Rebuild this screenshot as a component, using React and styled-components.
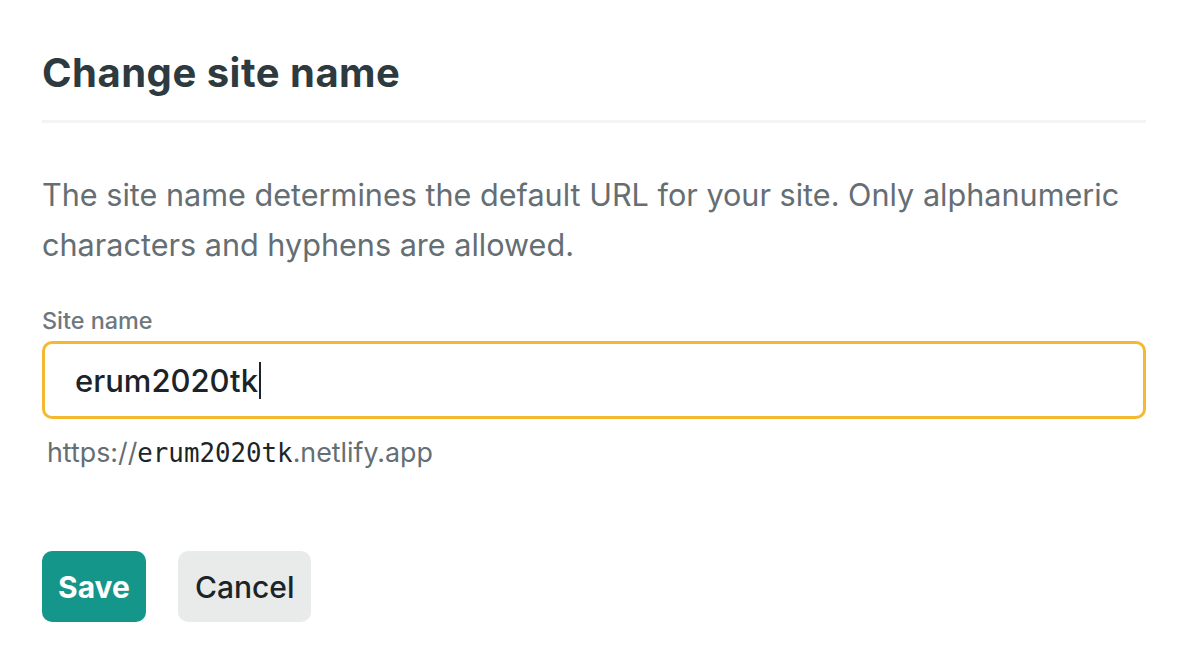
import React from 'react'
import styled, { createGlobalStyle } from 'styled-components'

const Global = createGlobalStyle`
  html, body {
    margin: 0;
    padding: 0;
    background: #ffffff;
  }
  body {
    font-family: Inter, "Noto Sans", "Liberation Sans", sans-serif;
    -webkit-font-smoothing: antialiased;
  }
`

const Panel = styled.section`
  width: 1104px;
  padding: 49px 42px 0 42px;
`

const Title = styled.h2`
  margin: 0;
  padding-bottom: 23px;
  font-size: 40px;
  line-height: 48px;
  font-weight: 700;
  color: #2d3b41;
  letter-spacing: 0.5px;
  border-bottom: 3px solid #f3f5f5;
`

const Description = styled.p`
  margin: 47px 0 0 0;
  font-size: 30.6px;
  line-height: 50px;
  color: #646e73;
  font-weight: 400;
`

const Field = styled.div`
  display: flex;
  flex-direction: column;
  margin-top: 37px;
`

const Label = styled.label`
  font-size: 23.4px;
  line-height: 28px;
  font-weight: 500;
  color: #6e787d;
  margin-bottom: 6px;
`

const Input = styled.div`
  box-sizing: border-box;
  height: 78px;
  border: 3px solid #f4b92f;
  border-radius: 10px;
  padding: 0 30px;
  display: flex;
  align-items: center;
  font-size: 31px;
  font-weight: 500;
  color: #1b2429;
`

const Caret = styled.span`
  display: inline-block;
  width: 2px;
  height: 37px;
  background: #1b2429;
  margin-left: 1px;
`

const Hint = styled.div`
  margin: 18px 0 0 5px;
  font-size: 26.8px;
  line-height: 30px;
  color: #646e73;
`

const Mono = styled.code`
  font-family: "DejaVu Sans Mono", "Liberation Mono", monospace;
  font-size: 25.8px;
  color: #1b2429;
`

const Actions = styled.div`
  display: flex;
  gap: 32px;
  margin-top: 83px;
`

const Button = styled.button`
  height: 71px;
  padding: 0 ${p => (p.primary ? 16 : 17)}px;
  border: none;
  border-radius: 10px;
  font-family: inherit;
  font-size: 30px;
  font-weight: ${p => (p.primary ? 700 : 500)};
  background: ${p => (p.primary ? '#15968a' : '#e9ebeb')};
  color: ${p => (p.primary ? '#ffffff' : '#1b2429')};
  cursor: pointer;
`

export default function App() {
  return (
    <>
      <Global />
      <Panel>
        <Title>Change site name</Title>
        <Description>
          The site name determines the default URL for your site. Only alphanumeric
          characters and hyphens are allowed.
        </Description>
        <Field>
          <Label>Site name</Label>
          <Input>
            erum2020tk<Caret />
          </Input>
        </Field>
        <Hint>
          https://<Mono>erum2020tk</Mono>.netlify.app
        </Hint>
        <Actions>
          <Button primary>Save</Button>
          <Button>Cancel</Button>
        </Actions>
      </Panel>
    </>
  )
}
